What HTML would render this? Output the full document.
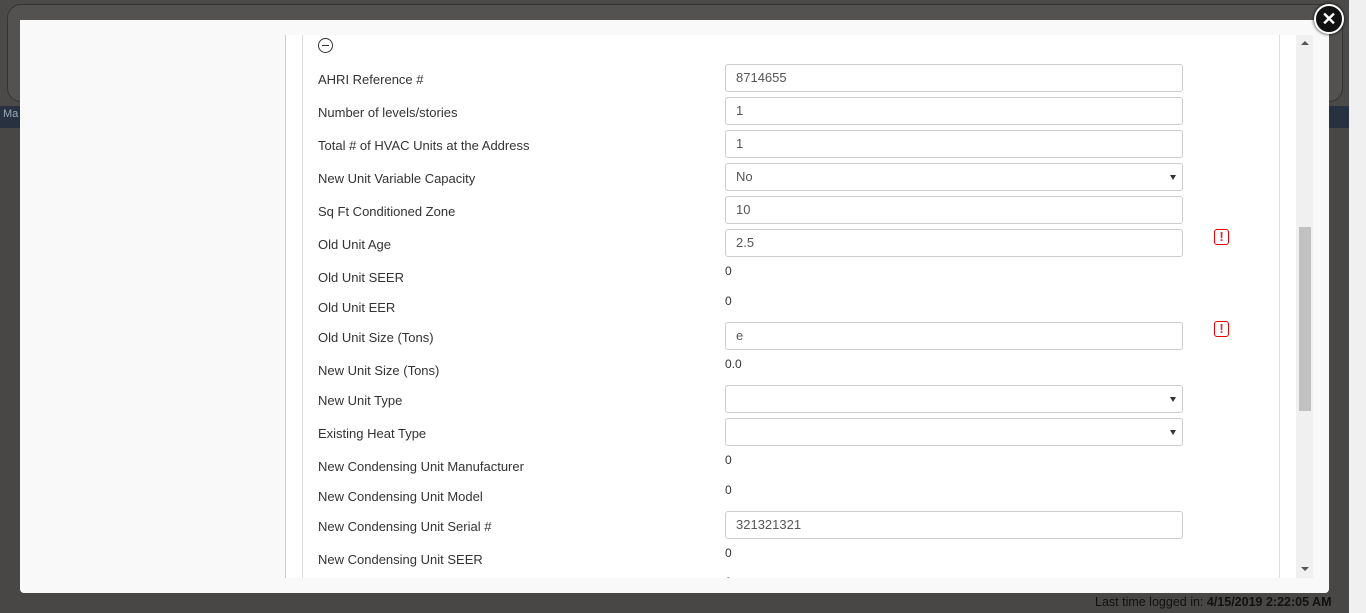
<!DOCTYPE html>
<html><head><style>
*{box-sizing:border-box;margin:0;padding:0}
body{width:1366px;height:613px;overflow:hidden;background:#4b4a49;font-family:"Liberation Sans",sans-serif;position:relative}
.a{position:absolute}
.lbl{position:absolute;left:318px;font-size:13px;color:#333}
.inp{position:absolute;left:725px;width:458px;height:28px;border:1px solid #ccc;border-radius:3px;background:#fff;font-size:13px;color:#555;padding:6px 10px;line-height:14px}
.sel::after{content:"";position:absolute;right:6px;top:11px;border-left:3px solid transparent;border-right:3px solid transparent;border-top:5px solid #333}
.val{position:absolute;left:725px;font-size:12px;color:#333}
.err{position:absolute;left:1214px;width:15px;height:16px;border:1px solid #e00;border-radius:3px;color:#c33;font-size:13px;font-weight:bold;text-align:center;line-height:14px}
</style></head><body>
<div class="a" style="left:7px;top:4px;width:1336px;height:98px;border:1px solid #333;border-radius:14px;background:#545250"></div>
<div class="a" style="left:0;top:106px;width:1349px;height:22px;background:#27313f"></div>
<div class="a" style="left:3px;top:108px;font-size:11px;color:#9ab">Ma</div>
<div class="a" style="left:0;top:128px;width:1349px;height:485px;background:#484746"></div>
<div class="a" style="left:1349px;top:0;width:17px;height:613px;background:#f0f0f0"></div>
<div class="a" style="left:1095px;top:595px;font-size:12.5px;color:#111;white-space:nowrap">Last time logged in: <b>4/15/2019 2:22:05 AM</b></div>
<div class="a" style="left:20px;top:20px;width:1309px;height:573px;background:#f9f9f9;border-radius:0 0 4px 4px"></div>
<div class="a" style="left:285px;top:35px;width:1011px;height:543px;background:#fff;border-left:1px solid #ccc"></div>
<div class="a" style="left:302px;top:35px;width:978px;height:543px;border-left:1px solid #ddd;border-right:1px solid #ddd"></div>
<div class="a" style="left:1296px;top:35px;width:17px;height:543px;background:#f0f0f0"></div>
<div class="a" style="left:1299px;top:227px;width:12px;height:184px;background:#c1c1c1"></div>
<div class="a" style="left:1301px;top:41px;border-left:4px solid transparent;border-right:4px solid transparent;border-bottom:4px solid #555"></div>
<div class="a" style="left:1301px;top:567px;border-left:4px solid transparent;border-right:4px solid transparent;border-top:4px solid #555"></div>
<div class="a" style="left:1314px;top:4px;width:30px;height:30px;border-radius:50%;background:#111;border:2px solid #fff;box-shadow:0 0 3px #000;color:#fff;font-size:18px;font-weight:bold;text-align:center;line-height:26px">✕</div>
<div class="a" style="left:318px;top:38px;width:15px;height:15px;border:1px solid #333;border-radius:50%"><div class="a" style="left:3px;top:6px;width:7px;height:1px;background:#333"></div></div>

<div class="lbl" style="top:72px">AHRI Reference #</div>
<div class="lbl" style="top:105px">Number of levels/stories</div>
<div class="lbl" style="top:138px">Total # of HVAC Units at the Address</div>
<div class="lbl" style="top:171px">New Unit Variable Capacity</div>
<div class="lbl" style="top:204px">Sq Ft Conditioned Zone</div>
<div class="lbl" style="top:237px">Old Unit Age</div>
<div class="lbl" style="top:270px">Old Unit SEER</div>
<div class="lbl" style="top:300px">Old Unit EER</div>
<div class="lbl" style="top:330px">Old Unit Size (Tons)</div>
<div class="lbl" style="top:363px">New Unit Size (Tons)</div>
<div class="lbl" style="top:393px">New Unit Type</div>
<div class="lbl" style="top:426px">Existing Heat Type</div>
<div class="lbl" style="top:459px">New Condensing Unit Manufacturer</div>
<div class="lbl" style="top:489px">New Condensing Unit Model</div>
<div class="lbl" style="top:519px">New Condensing Unit Serial #</div>
<div class="lbl" style="top:552px">New Condensing Unit SEER</div>

<div class="inp" style="top:64px">8714655</div>
<div class="inp" style="top:97px">1</div>
<div class="inp" style="top:130px">1</div>
<div class="inp sel" style="top:163px">No</div>
<div class="inp" style="top:196px">10</div>
<div class="inp" style="top:229px">2.5</div>
<div class="err" style="top:229px">!</div>
<div class="val" style="top:264px">0</div>
<div class="val" style="top:294px">0</div>
<div class="inp" style="top:322px">e</div>
<div class="err" style="top:321px">!</div>
<div class="val" style="top:357px">0.0</div>
<div class="inp sel" style="top:385px"></div>
<div class="inp sel" style="top:418px"></div>
<div class="val" style="top:453px">0</div>
<div class="val" style="top:483px">0</div>
<div class="inp" style="top:511px">321321321</div>
<div class="val" style="top:546px">0</div>
<div class="val" style="top:575px">0</div>
<div class="a" style="left:285px;top:578px;width:1028px;height:15px;background:#f9f9f9"></div>
</body></html>
